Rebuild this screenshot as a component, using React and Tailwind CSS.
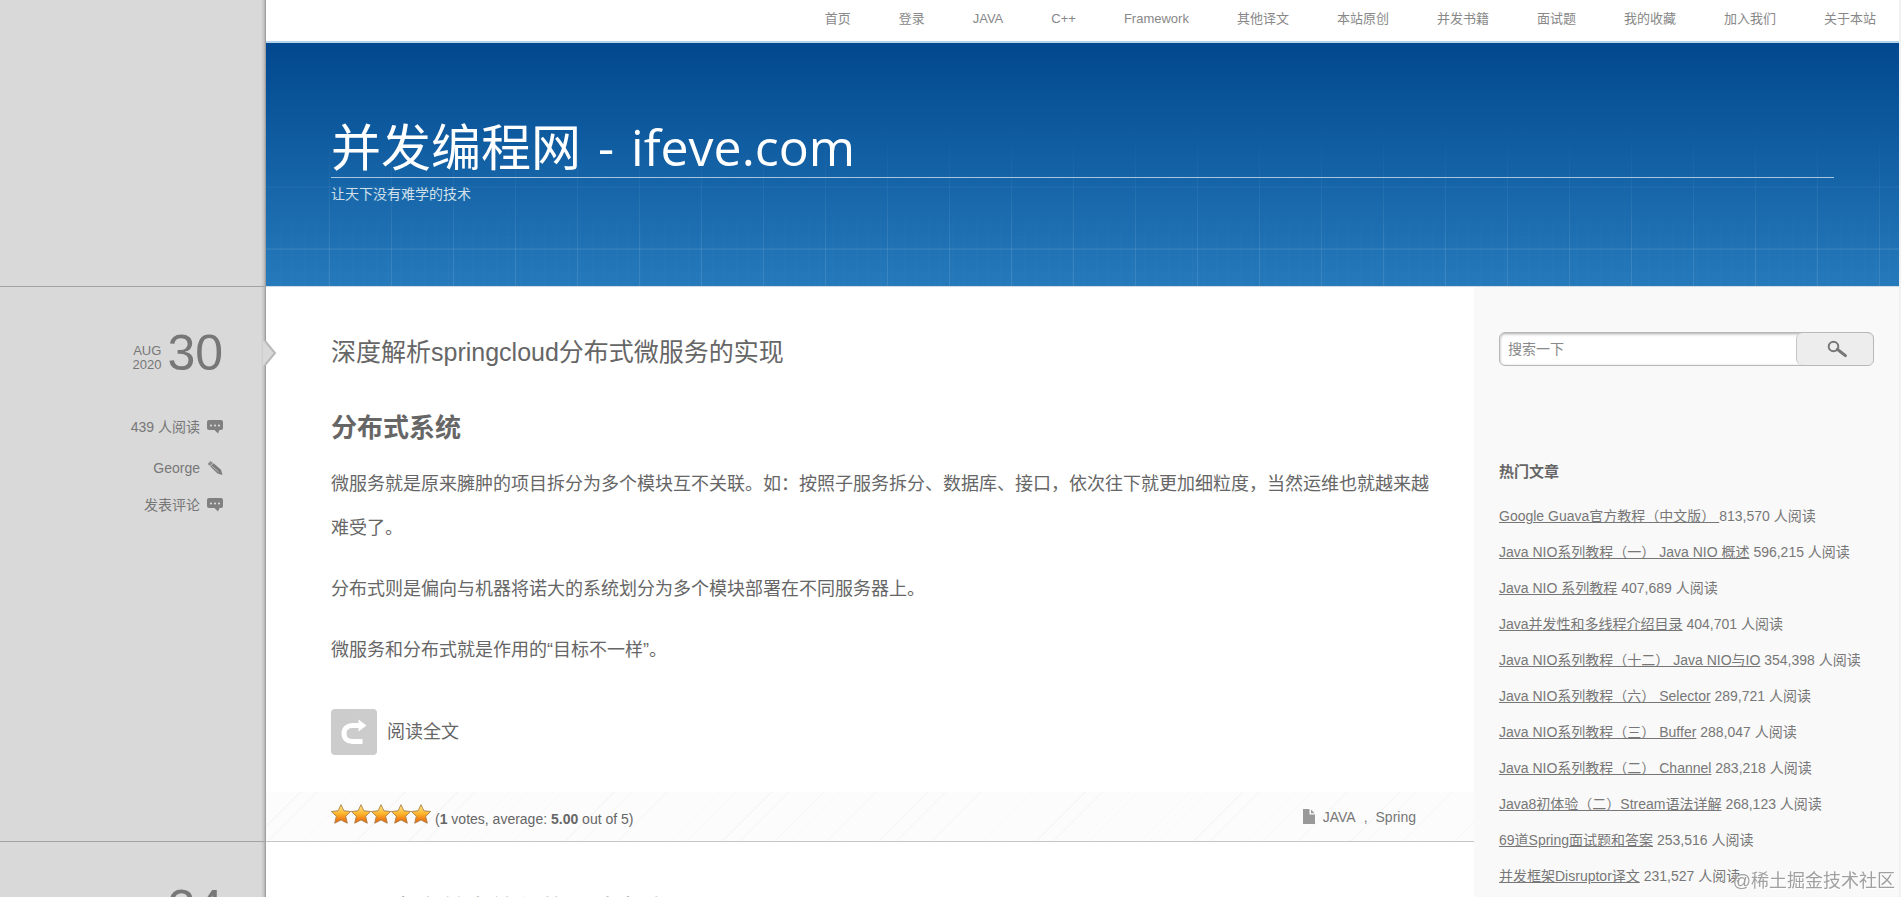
import React from 'react';

const navItems = [
  '首页',
  '登录',
  'JAVA',
  'C++',
  'Framework',
  '其他译文',
  '本站原创',
  '并发书籍',
  '面试题',
  '我的收藏',
  '加入我们',
  '关于本站',
];

const hotPosts = [
  { title: 'Google Guava官方教程（中文版） ', views: '813,570' },
  { title: 'Java NIO系列教程（一） Java NIO 概述', views: '596,215' },
  { title: 'Java NIO 系列教程', views: '407,689' },
  { title: 'Java并发性和多线程介绍目录', views: '404,701' },
  { title: 'Java NIO系列教程（十二） Java NIO与IO', views: '354,398' },
  { title: 'Java NIO系列教程（六） Selector', views: '289,721' },
  { title: 'Java NIO系列教程（三） Buffer', views: '288,047' },
  { title: 'Java NIO系列教程（二） Channel', views: '283,218' },
  { title: 'Java8初体验（二）Stream语法详解', views: '268,123' },
  { title: '69道Spring面试题和答案', views: '253,516' },
  { title: '并发框架Disruptor译文', views: '231,527' },
];

const CommentIcon = () => (
  <svg width="16" height="14" viewBox="0 0 16 14" aria-hidden="true">
    <path d="M2 0h12a2 2 0 0 1 2 2v6a2 2 0 0 1-2 2h-1.500l-1.500 3.500L7.500 10H2a2 2 0 0 1-2-2V2a2 2 0 0 1 2-2z" fill="#808080" />
    <circle cx="4" cy="5.500" r="1.100" fill="#d9d9d9" />
    <circle cx="8" cy="5.500" r="1.100" fill="#d9d9d9" />
    <circle cx="12" cy="5.500" r="1.100" fill="#d9d9d9" />
  </svg>
);

const PencilIcon = () => (
  <svg width="16" height="14" viewBox="0 0 16 14" aria-hidden="true">
    <path d="M0.500 3 3.500 0 6 2 3 5z" fill="#8c8c8c" />
    <path d="M3.400 5.400 6.600 2.200 14 8.800 15.500 14 10.500 12.500z" fill="#7c7c7c" />
    <path d="M5 5.200 11.500 11" stroke="#b5b5b5" strokeWidth="1" />
  </svg>
);

const SearchIcon = () => (
  <svg width="20" height="18" viewBox="0 0 20 18" aria-hidden="true">
    <circle cx="6.500" cy="6.500" r="4.800" fill="none" stroke="#777" strokeWidth="2" />
    <path d="M10.300 9.300 18.400 15.600" stroke="#777" strokeWidth="3" strokeLinecap="round" />
  </svg>
);

const FileIcon = () => (
  <svg width="12" height="15" viewBox="0 0 12 15" aria-hidden="true">
    <path d="M0 0h6.500v5.500H12V15H0z" fill="#999" />
    <path d="M8 0.500 11.600 4.200H8z" fill="#999" />
  </svg>
);

const ReadMoreIcon = () => (
  <svg width="28" height="26" viewBox="0 0 28 26" aria-hidden="true">
    <path d="M22.500 22.500H12.500C7.500 22.500 4 19.500 4 14.500S7.500 6.500 12.500 6.500H19" fill="none" stroke="#fff" strokeWidth="5" />
    <path d="M18.500 0.500 26.500 6.500 18.500 12.500z" fill="#fff" />
  </svg>
);

const Star = () => (
  <svg width="20" height="20" viewBox="0 0 20 20" aria-hidden="true">
    <defs>
      <linearGradient id="star" x1="0" y1="0" x2="0" y2="1">
        <stop offset="0.100" stopColor="#ffe27a" />
        <stop offset="0.500" stopColor="#fdb32a" />
        <stop offset="1" stopColor="#e65c08" />
      </linearGradient>
    </defs>
    <path
      d="M10 .7l2.900 6.100 6.800.7-5 4.700 1.600 7L10 15.900 3.700 19.200l1.600-7-5-4.700 6.800-.7z"
      fill="url(#star)"
      stroke="#a8804a"
      strokeWidth="0.900"
      strokeLinejoin="round"
    />
  </svg>
);

const DateBlock = ({ month, year, day }) => (
  <div className="flex items-start justify-end gap-1.5">
    <div className="mt-4 text-right text-[13px] leading-[14px]">
      {month}
      <br />
      {year}
    </div>
    <div className="text-[50px] leading-[50px]">{day}</div>
  </div>
);

const railClass =
  'relative border-b border-[#a3a3a3] bg-[linear-gradient(to_left,#939393,#c4c4c4_2px,#d9d9d9_5px)]';

const App = () => {
  return (
    <div className="h-screen overflow-hidden border-r-2 border-[#f1f1f1] bg-white font-['Liberation_Sans','Noto_Sans_CJK_SC',sans-serif] text-sm text-[#777]">
      {/* Header */}
      <header className="grid grid-cols-[266px_1fr]">
        <div className={railClass} />
        <div>
          <nav className="flex h-[43px] justify-end gap-12 border-b-2 border-[#b4d4ec] pr-[23px] text-[13px] leading-[38px] text-[#888]">
            {navItems.map((item) => (
              <a key={item} href="#" className="whitespace-nowrap">
                {item}
              </a>
            ))}
          </nav>
          <div className="relative h-[244px] border-b border-[#cfdbe4] bg-linear-to-b from-[#02488f] to-[#257abb] px-[65px] pt-[74px]">
            {/* Blueprint grid */}
            <div className="absolute inset-0 bg-[repeating-linear-gradient(90deg,transparent_0_61px,rgba(255,255,255,0.1)_61px_62px),repeating-linear-gradient(90deg,rgba(255,255,255,0.015)_0_1px,transparent_1px_12px),repeating-linear-gradient(0deg,transparent_0_36px,rgba(255,255,255,0.06)_36px_38px,transparent_38px_62px),repeating-linear-gradient(0deg,rgba(255,255,255,0.015)_0_1px,transparent_1px_12px)] bg-[position:2px_0] mask-[linear-gradient(to_bottom,transparent_35%,black_85%)]" />
            <div className="relative">
              <h1 className="border-b border-[#a9c6df] font-['Open_Sans','Noto_Sans_CJK_SC',sans-serif] text-[50px] leading-[60px] text-white">
                <a href="#">
                  并发编程网 <span className="mx-1">-</span> ifeve.com
                </a>
              </h1>
              <p className="mt-1.5 leading-5 text-[#cfe0ea]">让天下没有难学的技术</p>
            </div>
          </div>
        </div>
      </header>

      <div className="grid grid-cols-[266px_1fr_425px]">
        {/* First post */}
        <div className={`${railClass} pt-[41px] pr-[43px]`}>
          <DateBlock month="AUG" year="2020" day="30" />
          <ul className="mt-[39px] leading-5">
            <li className="flex items-center justify-end gap-[7px]">
              439 人阅读 <CommentIcon />
            </li>
            <li className="mt-[21px] flex items-center justify-end gap-[7px]">
              <a href="#">George</a> <PencilIcon />
            </li>
            <li className="mt-[17px] flex items-center justify-end gap-[7px]">
              <a href="#">发表评论</a> <CommentIcon />
            </li>
          </ul>
          <svg className="absolute top-[53px] left-[263px] z-10" width="14" height="26" viewBox="0 0 14 26" aria-hidden="true">
            <path d="M0 1h2l10 12L2 25H0z" fill="#d9d9d9" />
            <path d="M2 1l10 12L2 25" fill="none" stroke="#b9b9b9" strokeWidth="2" />
          </svg>
        </div>

        <article className="flex flex-col border-b border-[#c6c6c6] pt-[50px] text-[#666]">
          <div className="pr-10 pl-[65px]">
            <h2 className="text-[25px] leading-[30px]">
              <a href="#">深度解析springcloud分布式微服务的实现</a>
            </h2>
            <h3 className="mt-[43px] text-[26px] leading-9 font-bold">分布式系统</h3>
            <div className="mt-4 flex flex-col gap-[17px] text-lg leading-[44px]">
              <p>
                微服务就是原来臃肿的项目拆分为多个模块互不关联。如：按照子服务拆分、数据库、接口，依次往下就更加细粒度，当然运维也就越来越难受了。
              </p>
              <p>分布式则是偏向与机器将诺大的系统划分为多个模块部署在不同服务器上。</p>
              <p>微服务和分布式就是作用的“目标不一样”。</p>
            </div>
            <a href="#" className="mt-[37px] inline-flex items-center gap-2.5 text-lg leading-[46px]">
              <span className="flex size-[46px] items-center justify-center rounded-sm bg-[#ccc]">
                <ReadMoreIcon />
              </span>
              阅读全文
            </a>
          </div>
          <footer className="mt-[37px] flex h-[49px] items-center justify-between bg-[#fcfcfc] bg-[repeating-linear-gradient(135deg,transparent_0_24px,#f6f6f6_24px_25px,transparent_25px_36px,#f8f8f8_36px_37px)] pr-[58px] pl-[65px]">
            <div className="flex items-center">
              <span className="mb-1.5 flex">
                {[1, 2, 3, 4, 5].map((n) => (
                  <Star key={n} />
                ))}
              </span>
              <span className="mt-1 ml-1">
                (<strong>1</strong> votes, average: <strong>5.00</strong> out of 5)
              </span>
            </div>
            <div className="flex items-center text-[#777]">
              <FileIcon />
              <a href="#" className="ml-2">JAVA</a>
              <span className="mx-2">,</span>
              <a href="#">Spring</a>
            </div>
          </footer>
        </article>

        {/* Sidebar */}
        <aside className="row-span-2 bg-[#f9f9f9] px-[25px] pt-[45px]">
          <form className="flex h-[34px] overflow-hidden rounded-md border border-[#b8b8b8] bg-white shadow-[inset_0_1px_3px_#aaa]">
            <input
              type="text"
              aria-label="搜索"
              placeholder="搜索一下"
              className="min-w-0 flex-1 bg-transparent px-2 text-sm outline-none placeholder:text-[#888]"
            />
            <button
              type="button"
              aria-label="搜索"
              className="flex w-[77px] items-center justify-center rounded-md border-l border-[#c6c6c6] bg-[#ededed] pl-1"
            >
              <SearchIcon />
            </button>
          </form>
          <h3 className="mt-24 text-[15px] leading-5 font-bold text-[#666]">热门文章</h3>
          <ul className="mt-4 leading-9">
            {hotPosts.map((post) => (
              <li key={post.views} className="whitespace-nowrap">
                <a href="#" className="underline">{post.title}</a> {post.views} 人阅读
              </li>
            ))}
          </ul>
        </aside>

        {/* Second post */}
        <div className={`${railClass} pt-[41px] pr-[43px] pb-16`}>
          <DateBlock month="AUG" year="2020" day="24" />
        </div>
        <article className="pt-[52px] pr-10 pl-[65px] text-[#666]">
          <h2 className="text-[25px] leading-[30px]">
            <a href="#">Java 中高并发编程的设计实践</a>
          </h2>
        </article>
      </div>

      <div className="fixed right-1.5 bottom-1 text-lg leading-6 text-[#a0a0a0] [text-shadow:1px_1px_1px_#fff]">
        @稀土掘金技术社区
      </div>
    </div>
  );
};

export default App;
